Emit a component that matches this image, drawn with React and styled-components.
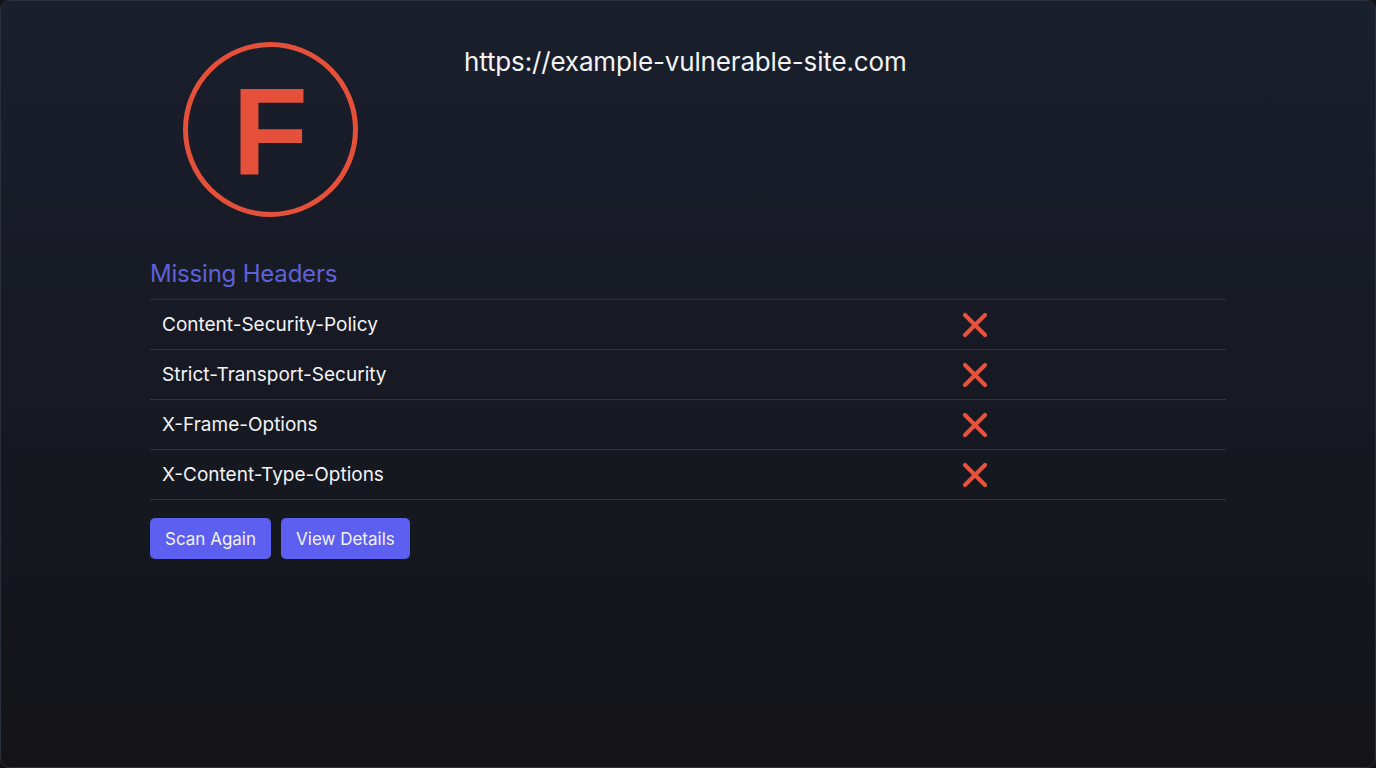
import React from 'react';
import styled, { createGlobalStyle } from 'styled-components';

const GlobalStyle = createGlobalStyle`
  html, body {
    margin: 0;
    padding: 0;
    height: 100%;
  }
  body {
    background: #141418;
    font-family: Inter, "Noto Sans", "Liberation Sans", sans-serif;
    color: #f1f1f3;
  }
  #root {
    height: 100%;
  }
`;

const Page = styled.div`
  box-sizing: border-box;
  height: 768px;
  padding: 40px 149px 0;
  background: linear-gradient(180deg, #1a1f2d 0%, #171a24 45%, #141418 100%);
  border: 1px solid #2c303b;
  border-radius: 10px;
  overflow: hidden;
`;

const TopRow = styled.div`
  display: flex;
  align-items: flex-start;
  height: 178px;
`;

const GradeBox = styled.div`
  width: 240px;
  display: flex;
  justify-content: center;
`;

const GradeCircle = styled.div`
  box-sizing: border-box;
  width: 175px;
  height: 175px;
  margin-top: 1px;
  border-radius: 50%;
  border: 5px solid ${({ color }) => color};
  display: flex;
  align-items: center;
  justify-content: center;
  color: ${({ color }) => color};
  font-family: "Liberation Sans", Arial, sans-serif;
  font-weight: 700;
  font-size: 124px;
  line-height: 1;
  padding-top: 2px;
`;

const SiteUrl = styled.h1`
  margin: 4px 0 0 74px;
  font-size: 26px;
  font-weight: 400;
  line-height: 34px;
  color: #f4f4f6;
  letter-spacing: -0.15px;
`;

const SectionTitle = styled.h2`
  margin: 40px 0 10px;
  font-size: 24px;
  font-weight: 400;
  line-height: 30px;
  color: #5f61d8;
  letter-spacing: -0.2px;
`;

const HeaderTable = styled.div`
  border-top: 1px solid #30333d;
`;

const HeaderRow = styled.div`
  box-sizing: border-box;
  display: grid;
  grid-template-columns: 800px 1fr;
  align-items: center;
  height: 50px;
  border-bottom: 1px solid #30333d;
`;

const HeaderName = styled.div`
  padding: 0 12px;
  font-size: 19px;
  color: #f3f3f5;
`;

const StatusCell = styled.div`
  padding: 0 12px;
  display: flex;
  align-items: center;
`;

const Actions = styled.div`
  display: flex;
  gap: 10px;
  margin-top: 18px;
`;

const Button = styled.button`
  height: 41px;
  padding: 0 15px;
  border: none;
  border-radius: 5px;
  background: #5d5ff0;
  color: #f2f2fb;
  font-family: inherit;
  font-size: 17px;
  cursor: pointer;
`;

const CrossIcon = () => (
  <svg width="26" height="26" viewBox="0 0 26 26">
    <path
      d="M3 3 L23 23 M23 3 L3 23"
      stroke="#e8523c"
      strokeWidth="4.2"
      strokeLinecap="round"
      fill="none"
    />
  </svg>
);

const missingHeaders = [
  'Content-Security-Policy',
  'Strict-Transport-Security',
  'X-Frame-Options',
  'X-Content-Type-Options',
];

export default function App() {
  return (
    <>
      <GlobalStyle />
      <Page>
        <TopRow>
          <GradeBox>
            <GradeCircle color="#e5503a">F</GradeCircle>
          </GradeBox>
          <SiteUrl>https://example-vulnerable-site.com</SiteUrl>
        </TopRow>

        <SectionTitle>Missing Headers</SectionTitle>
        <HeaderTable>
          {missingHeaders.map((name) => (
            <HeaderRow key={name}>
              <HeaderName>{name}</HeaderName>
              <StatusCell>
                <CrossIcon />
              </StatusCell>
            </HeaderRow>
          ))}
        </HeaderTable>

        <Actions>
          <Button>Scan Again</Button>
          <Button>View Details</Button>
        </Actions>
      </Page>
    </>
  );
}
